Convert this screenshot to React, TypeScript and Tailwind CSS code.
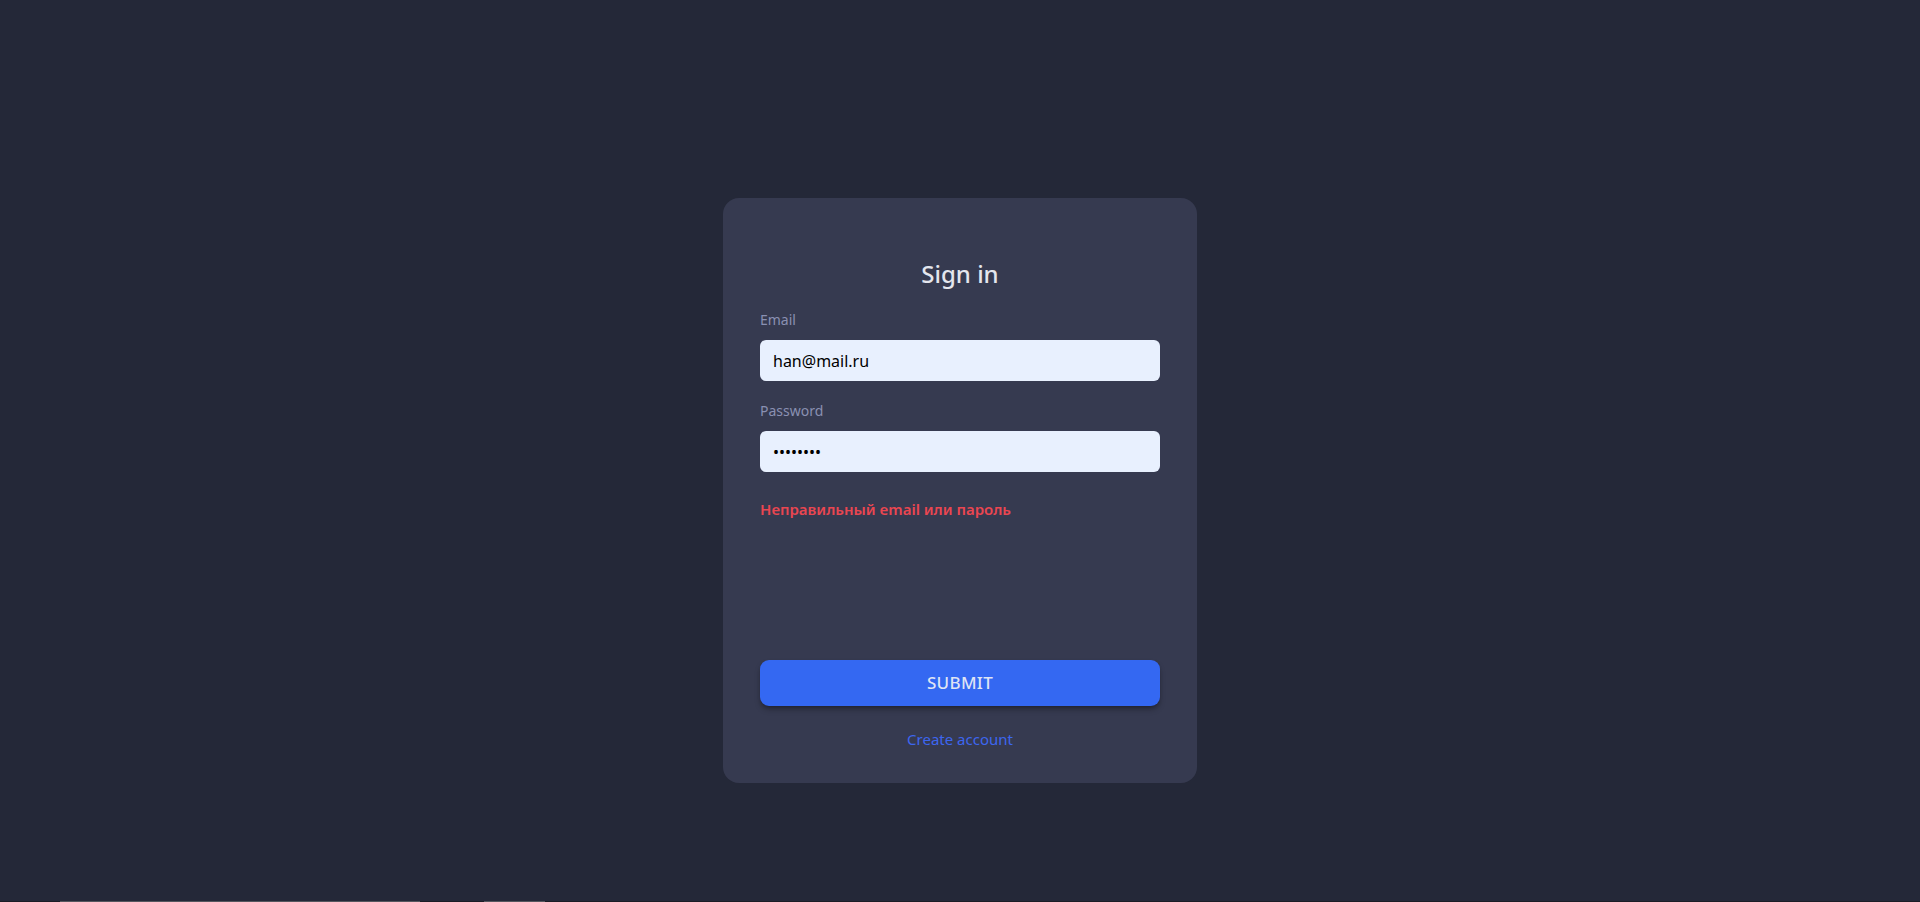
import React from "react";

export default function App() {
  return (
    <div className="w-full h-[902px] bg-[#242838] flex flex-col font-['Noto_Sans',sans-serif] overflow-hidden">
      <div className="flex-1 flex justify-center pt-[198px]">
        <SignInCard />
      </div>
      <div className="h-px w-full flex bg-[#1b1d26]">
        <div className="w-[60px]"></div>
        <div className="w-[360px] bg-[#55575e]"></div>
        <div className="w-[64px]"></div>
        <div className="w-[61px] bg-[#55575e]"></div>
      </div>
    </div>
  );
}

function SignInCard() {
  return (
    <div className="w-[474px] h-[585px] bg-[#363a50] rounded-[16px] px-[37px] pt-[60px] pb-[33px] flex flex-col">
      <h1 className="text-center text-[24px] leading-[32px] font-medium text-[#e4e6ee]">
        Sign in
      </h1>
      <div className="mt-5 flex flex-col gap-5">
        <Field label="Email" type="email" value="han@mail.ru" />
        <Field label="Password" type="password" value="12345678" />
      </div>
      <div className="mt-[26px] text-[15px] leading-[22px] font-semibold text-[#ea4651]">
        Неправильный email или пароль
      </div>
      <div className="flex-1"></div>
      <button className="h-[46px] w-full rounded-[9px] bg-[#3468f2] text-[#dfe4f4] text-[17px] font-medium tracking-[0.02em] shadow-md shadow-black/30">
        SUBMIT
      </button>
      <a className="mt-[22px] self-center text-[15px] leading-[22px] text-[#3d66ef]">
        Create account
      </a>
    </div>
  );
}

function Field({
  label,
  type,
  value,
}: {
  label: string;
  type: string;
  value: string;
}) {
  return (
    <div className="flex flex-col gap-[10px]">
      <label className="text-[14px] leading-[20px] text-[#8a90b2]">{label}</label>
      <input
        type={type}
        defaultValue={value}
        readOnly
        className="h-[41px] w-full rounded-[6px] bg-[#e8f0fe] px-[13px] text-[16px] text-black outline-none"
      />
    </div>
  );
}
